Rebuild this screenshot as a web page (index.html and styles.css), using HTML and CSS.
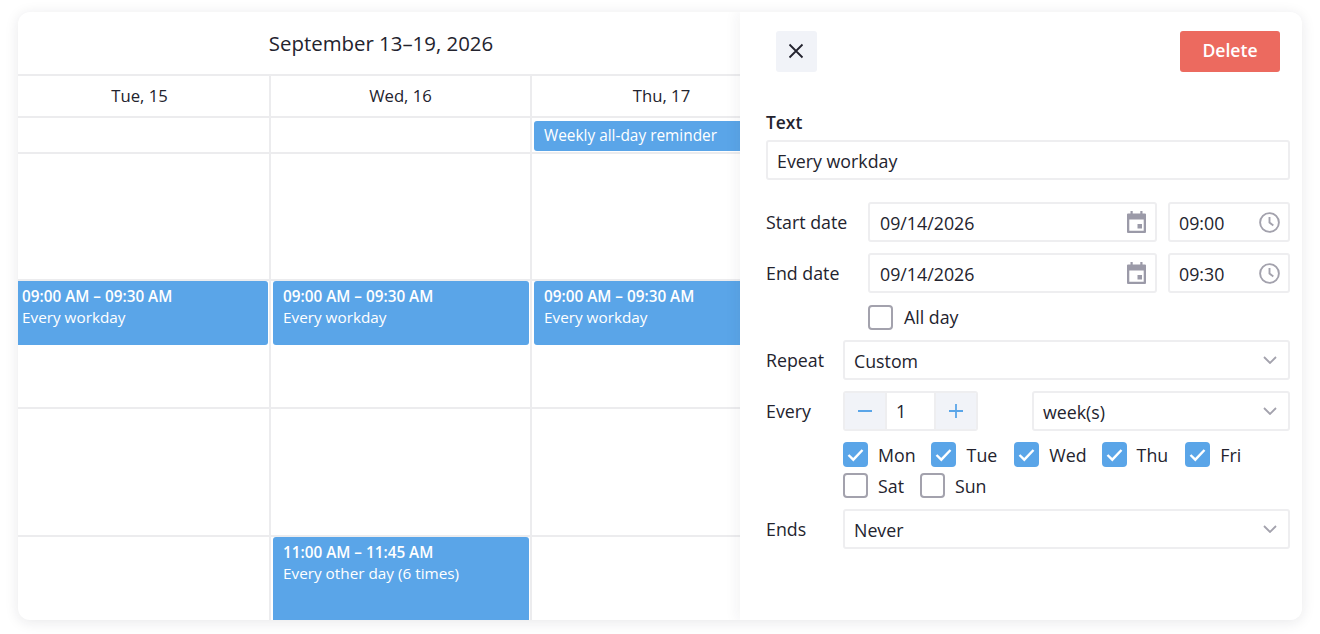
FILE: index.html
```html
<!DOCTYPE html>
<html lang="en">
<head>
<meta charset="utf-8">
<title>Scheduler</title>
<link rel="stylesheet" href="styles.css">
</head>
<body>
<main class="card">
  <section class="calendar">
    <header class="title">September 13–19, 2026</header>
    <div class="columns">
      <div class="col col-a">
        <div class="day">Tue, 15</div>
        <div class="allday"></div>
        <div class="hour"></div>
        <div class="hour"><div class="event"><b>09:00 AM – 09:30 AM</b><span>Every workday</span></div></div>
        <div class="hour"></div>
        <div class="hour"></div>
      </div>
      <div class="col">
        <div class="day">Wed, 16</div>
        <div class="allday"></div>
        <div class="hour"></div>
        <div class="hour"><div class="event"><b>09:00 AM – 09:30 AM</b><span>Every workday</span></div></div>
        <div class="hour"></div>
        <div class="hour"><div class="event tall"><b>11:00 AM – 11:45 AM</b><span>Every other day (6 times)</span></div></div>
      </div>
      <div class="col">
        <div class="day">Thu, 17</div>
        <div class="allday"><div class="allday-event">Weekly all-day reminder</div></div>
        <div class="hour"></div>
        <div class="hour"><div class="event"><b>09:00 AM – 09:30 AM</b><span>Every workday</span></div></div>
        <div class="hour"></div>
        <div class="hour"></div>
      </div>
    </div>
  </section>
  <aside class="panel">
    <div class="toolbar">
      <button class="close" aria-label="Close">
        <svg width="16" height="16" viewBox="0 0 16 16"><path d="M1.5 1.5 14.5 14.5M14.5 1.5 1.5 14.5" stroke="#23232e" stroke-width="1.8" fill="none"/></svg>
      </button>
      <button class="delete">Delete</button>
    </div>
    <label class="text-label">Text</label>
    <div class="input text-input">Every workday</div>
    <div class="row row-date">
      <span class="lbl">Start date</span>
      <div class="input date">09/14/2026
        <svg class="ico" width="19" height="22" viewBox="0 0 19 22"><path fill="#9b9aa8" d="M3.5 0h2.2v2.5h7.6V0h2.2v2.5H18a1 1 0 0 1 1 1V21a1 1 0 0 1-1 1H1a1 1 0 0 1-1-1V3.500a1 1 0 0 1 1-1h2.500zM2.300 8.500V19.700h14.400V8.500zm8.200 4.500h4.500v4.500h-4.500z"/></svg>
      </div>
      <div class="input time">09:00
        <svg class="ico" width="21" height="21" viewBox="0 0 21 21"><g fill="none" stroke="#a3a2ad" stroke-width="1.9"><circle cx="10.500" cy="10.500" r="9.400"/><path d="M10.500 5V10.500l3.800 3"/></g></svg>
      </div>
    </div>
    <div class="row row-date">
      <span class="lbl">End date</span>
      <div class="input date">09/14/2026
        <svg class="ico" width="19" height="22" viewBox="0 0 19 22"><path fill="#9b9aa8" d="M3.5 0h2.2v2.5h7.6V0h2.2v2.5H18a1 1 0 0 1 1 1V21a1 1 0 0 1-1 1H1a1 1 0 0 1-1-1V3.500a1 1 0 0 1 1-1h2.500zM2.300 8.500V19.700h14.400V8.500zm8.200 4.500h4.500v4.500h-4.500z"/></svg>
      </div>
      <div class="input time">09:30
        <svg class="ico" width="21" height="21" viewBox="0 0 21 21"><g fill="none" stroke="#a3a2ad" stroke-width="1.9"><circle cx="10.500" cy="10.500" r="9.400"/><path d="M10.500 5V10.500l3.800 3"/></g></svg>
      </div>
    </div>
    <div class="allday-check"><span class="box"></span>All day</div>
    <div class="row row-repeat">
      <span class="lbl">Repeat</span>
      <div class="input select">Custom
        <svg class="chev" width="14" height="8" viewBox="0 0 14 8"><path d="M1 1l6 6 6-6" fill="none" stroke="#a3a2ad" stroke-width="1.8"/></svg>
      </div>
    </div>
    <div class="row row-every">
      <span class="lbl">Every</span>
      <div class="stepper">
        <span class="step"><svg width="14" height="14" viewBox="0 0 14 14"><path d="M0 7h14" stroke="#5aa5e8" stroke-width="1.8"/></svg></span>
        <span class="num">1</span>
        <span class="step"><svg width="14" height="14" viewBox="0 0 14 14"><path d="M0 7h14M7 0v14" stroke="#5aa5e8" stroke-width="1.8"/></svg></span>
      </div>
      <div class="input select unit">week(s)
        <svg class="chev" width="14" height="8" viewBox="0 0 14 8"><path d="M1 1l6 6 6-6" fill="none" stroke="#a3a2ad" stroke-width="1.8"/></svg>
      </div>
    </div>
    <div class="weekdays">
      <div class="wd"><span class="box on"><svg width="17" height="14" viewBox="0 0 17 14"><path d="M1.500 7l4.800 4.700L15.500 2" fill="none" stroke="#fff" stroke-width="2.400"/></svg></span>Mon</div>
      <div class="wd wd-tue"><span class="box on"><svg width="17" height="14" viewBox="0 0 17 14"><path d="M1.500 7l4.800 4.700L15.500 2" fill="none" stroke="#fff" stroke-width="2.400"/></svg></span>Tue</div>
      <div class="wd"><span class="box on"><svg width="17" height="14" viewBox="0 0 17 14"><path d="M1.500 7l4.800 4.700L15.500 2" fill="none" stroke="#fff" stroke-width="2.400"/></svg></span>Wed</div>
      <div class="wd wd-thu"><span class="box on"><svg width="17" height="14" viewBox="0 0 17 14"><path d="M1.500 7l4.800 4.700L15.500 2" fill="none" stroke="#fff" stroke-width="2.400"/></svg></span>Thu</div>
      <div class="wd"><span class="box on"><svg width="17" height="14" viewBox="0 0 17 14"><path d="M1.500 7l4.800 4.700L15.500 2" fill="none" stroke="#fff" stroke-width="2.400"/></svg></span>Fri</div>
      <div class="wd wd-sat"><span class="box"></span>Sat</div>
      <div class="wd"><span class="box"></span>Sun</div>
    </div>
    <div class="row row-ends">
      <span class="lbl">Ends</span>
      <div class="input select">Never
        <svg class="chev" width="14" height="8" viewBox="0 0 14 8"><path d="M1 1l6 6 6-6" fill="none" stroke="#a3a2ad" stroke-width="1.8"/></svg>
      </div>
    </div>
  </aside>
</main>
</body>
</html>
```

FILE: styles.css
```css
* { box-sizing: border-box; }
html, body { height: 100%; }
body {
  margin: 0;
  padding: 12px 18px 14px;
  background: #fff;
  color: #23232e;
  font-family: "Open Sans", "Noto Sans", sans-serif;
  font-size: 17.8px;
  overflow: hidden;
}
.card {
  display: flex;
  height: 608px;
  border-radius: 12px;
  overflow: hidden;
  background: #fff;
  box-shadow: 0 2px 14px rgba(30, 30, 50, 0.10);
}
.calendar {
  width: 722px;
  flex: none;
  display: flex;
  flex-direction: column;
  overflow: hidden;
}
.title {
  flex: none;
  width: 726px;
  height: 64px;
  border-bottom: 2px solid #ececee;
  font-size: 20.4px;
  line-height: 63px;
  text-align: center;
}
.columns { display: flex; flex: 1; margin-left: -8px; }
.col { width: 261px; flex: none; border-right: 2px solid #ececee; }
.day {
  height: 42px;
  border-bottom: 2px solid #ececee;
  font-size: 16.7px;
  line-height: 40px;
  text-align: center;
}
.allday {
  height: 36px;
  padding: 3px 0 0 2px;
  border-bottom: 2px solid #ececee;
}
.allday-event {
  height: 30px;
  padding-left: 10px;
  border-radius: 3px;
  background: #5aa5e8;
  color: #fff;
  font-size: 15.4px;
  line-height: 29px;
  white-space: nowrap;
}
.hour { height: 128px; padding: 0 1px 0 2px; border-bottom: 2px solid #ececee; }
.allday + .hour { height: 127px; }
.event {
  height: 64px;
  padding: 4px 10px;
  border-radius: 3px;
  background: #5aa5e8;
  color: #fff;
  font-size: 15.3px;
  line-height: 22px;
}
.event b, .event span { display: block; }
.event b { font-weight: 600; margin-bottom: -1px; }
.tall { height: 100px; }
.panel {
  position: relative;
  flex: none;
  width: 562px;
  padding: 19px 12px 0 26px;
  background: #fff;
  box-shadow: -4px 0 12px rgba(30, 30, 50, 0.05);
}
.toolbar { display: flex; justify-content: space-between; align-items: center; height: 41px; margin-bottom: 40px; padding: 0 10px; }
.close {
  width: 41px; height: 41px; padding: 0 1px 1px 0;
  display: flex; align-items: center; justify-content: center;
  border: 0; border-radius: 3px; background: #f1f3f8;
}
.delete {
  width: 100px; height: 41px; padding: 0 0 2px;
  border: 0; border-radius: 3px; background: #ec6a5f; color: #fff;
  font: 600 17.6px/39px "Open Sans", sans-serif;
}
.text-label { display: block; font-weight: 600; font-size: 17.4px; line-height: 20px; margin: 1px 0 8px; }
.input {
  display: flex; align-items: center; justify-content: space-between;
  height: 40px; padding: 1px 9px 0;
  border: 2px solid #eeeef0; border-radius: 3px; background: #fff;
}
.text-input { margin-bottom: 22px; }
.row { display: flex; align-items: center; }
.row-date { margin-bottom: 11px; }
.row-date .lbl { width: 102px; }
.date { width: 289px; padding-left: 10px; }
.time { width: 122px; margin-left: 11px; padding-right: 8px; }
.ico { margin-top: -1px; }
.allday-check { display: flex; align-items: center; height: 27px; padding-top: 1px; margin: -1px 0 10px 102px; }
.allday-check .box { margin-right: 11px; }
.box {
  display: flex; align-items: center; justify-content: center;
  width: 25px; height: 25px; margin-right: 10px; flex: none;
  border: 2.5px solid #a3a2ad; border-radius: 4px; background: #fff;
}
.box.on { border: 0; background: #5aa5e8; }
.row-repeat, .row-every, .row-ends { height: 40px; }
.row-repeat .lbl, .row-every .lbl, .row-ends .lbl { width: 77px; flex: none; }
.row-repeat .select, .row-ends .select { flex: 1; }
.select { padding-right: 11px; }
.chev { margin-top: -1px; }
.row-repeat { margin-bottom: 11px; }
.stepper {
  display: flex; width: 135px; height: 40px;
  border: 2px solid #eeeef0; border-radius: 3px; overflow: hidden; flex: none;
}
.step { width: 40px; display: flex; align-items: center; justify-content: center; background: #f1f3f8; flex: none; }
.num { flex: 1; padding-left: 9px; border-left: 2px solid #eeeef0; border-right: 2px solid #eeeef0; line-height: 37px; }
.unit { flex: 1; margin-left: 54px; }
.weekdays { display: flex; flex-wrap: wrap; margin: 11px 0 11px 77px; width: 447px; row-gap: 6px; }
.wd { display: flex; align-items: center; height: 25px; margin-right: 15px; }
.wd-tue { margin-right: 17px; }
.wd-tue .box { margin-right: 11px; }
.wd-thu { margin-right: 17px; }
.wd-sat { margin-right: 16px; }
```
